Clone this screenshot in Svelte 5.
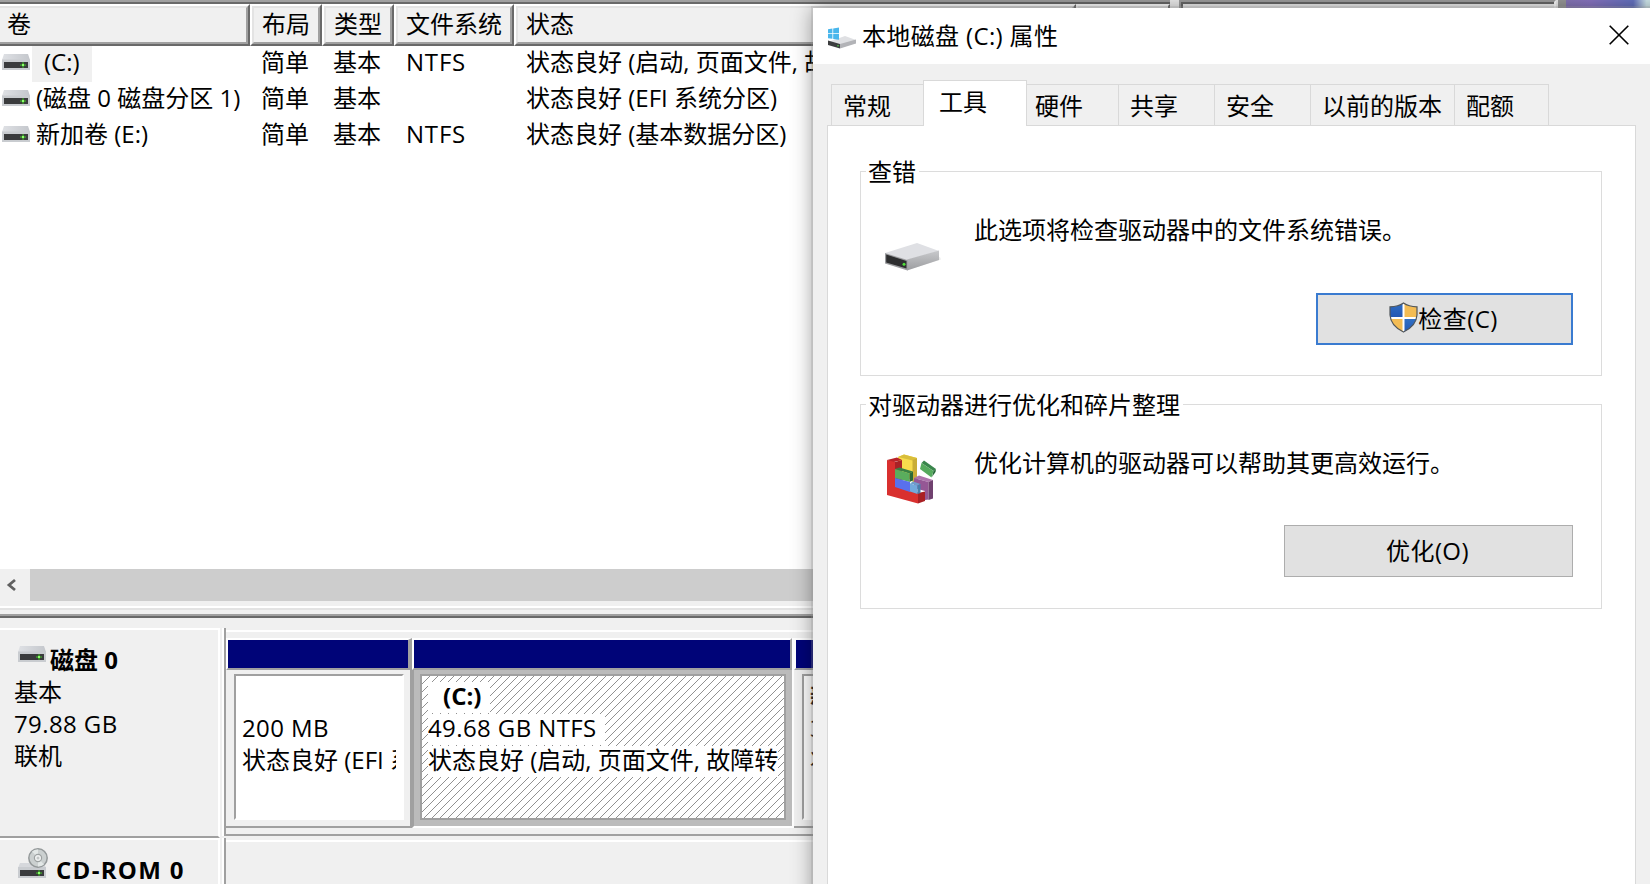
<script lang="ts">
	const volumes = [
		{ name: '(C:)', layout: '简单', type: '基本', fs: 'NTFS', status: '状态良好 (启动, 页面文件, 故障转储)', selected: true },
		{ name: '(磁盘 0 磁盘分区 1)', layout: '简单', type: '基本', fs: '', status: '状态良好 (EFI 系统分区)', selected: false },
		{ name: '新加卷 (E:)', layout: '简单', type: '基本', fs: 'NTFS', status: '状态良好 (基本数据分区)', selected: false }
	];

	const columns = [
		{ label: '卷', width: 250 },
		{ label: '布局', width: 72 },
		{ label: '类型', width: 72 },
		{ label: '文件系统', width: 120 },
		{ label: '状态', width: 562 }
	];

	const tabs = [
		{ label: '常规', width: 92 },
		{ label: '工具', width: 104 },
		{ label: '硬件', width: 91 },
		{ label: '共享', width: 96 },
		{ label: '安全', width: 96 },
		{ label: '以前的版本', width: 144 },
		{ label: '配额', width: 95 }
	];

	let active = $state('工具');
</script>

{#snippet driveIcon()}
	<svg class="drive" width="28" height="16" viewBox="0 0 28 16">
		<defs>
			<linearGradient id="lid" x1="0" x2="1">
				<stop offset="0" stop-color="#dfe1e5" />
				<stop offset="1" stop-color="#c4c7cc" />
			</linearGradient>
		</defs>
		<path d="M2 0H26L28 6H0Z" fill="url(#lid)" />
		<rect y="5.5" width="28" height="10.5" fill="#c9ccd0" />
		<rect x="2" y="8" width="24" height="6" fill="#3a3b3d" />
		<path d="M18 10.3h6v1.5h-6z" fill="#3f9a2c" />
		<path d="M20.2 8.2h1.7v5.6h-1.7z" fill="#3f9a2c" />
		<rect x="20" y="10" width="2" height="2" fill="#8dff6c" />
	</svg>
{/snippet}

<div class="desktop">
	<div class="manager">
		<div class="top">
			<div class="list-pane">
				<div class="header">
					{#each columns as col}
						<div class="col" style="width: {col.width}px"><span>{col.label}</span></div>
					{/each}
					<div class="col rest"></div>
				</div>
				<div class="rows">
					{#each volumes as v}
						<div class="row">
							<div class="cell volume">
								{@render driveIcon()}
								<span class="name" class:selected={v.selected}>{v.name}</span>
							</div>
							<div class="cell w72">{v.layout}</div>
							<div class="cell w72">{v.type}</div>
							<div class="cell fs">{v.fs}</div>
							<div class="cell">{v.status}</div>
						</div>
					{/each}
				</div>
				<div class="scrollbar">
					<svg width="30" height="32" viewBox="0 0 30 32">
						<path d="M15 11L9 16L15 21" fill="none" stroke="#606060" stroke-width="2.8" />
					</svg>
					<div class="thumb"></div>
				</div>
			</div>
			<div class="actions-pane"></div>
			<div class="wallpaper"></div>
		</div>
		<div class="splitter"></div>

		<div class="disk">
			<div class="disk-info">
				<div class="disk-title">{@render driveIcon()}<b>磁盘 0</b></div>
				<div>基本</div>
				<div class="size">79.88 GB</div>
				<div>联机</div>
			</div>
			<div class="parts">
				<div class="part efi">
					<div class="bar"></div>
					<div class="body">
						<div class="box">
							<div class="line">&nbsp;</div>
							<div class="line size">200 MB</div>
							<div class="line">状态良好 (EFI 系统分区)</div>
						</div>
					</div>
				</div>
				<div class="part sys">
					<div class="bar"></div>
					<div class="body">
						<div class="box">
							<svg class="hatch" width="362" height="142">
								<defs>
									<pattern id="hatch" width="8" height="8" patternUnits="userSpaceOnUse">
										<path d="M-1 1L1 -1M0 8L8 0M7 9L9 7" stroke="#858585" stroke-width="0.9" />
									</pattern>
								</defs>
								<rect width="362" height="142" fill="url(#hatch)" />
							</svg>
							<div class="line drive-name"><b>(C:)</b></div>
							<div class="line size">49.68 GB NTFS</div>
							<div class="line">状态良好 (启动, 页面文件, 故障转</div>
						</div>
					</div>
				</div>
				<div class="part data">
					<div class="bar"></div>
					<div class="body">
						<div class="box">
							<div class="line"><b>新加卷 (E:)</b></div>
							<div class="line size">30.00 GB NTFS</div>
							<div class="line">状态良好 (基本数据分区)</div>
						</div>
					</div>
				</div>
			</div>
		</div>

		<div class="disk cdrom">
			<div class="disk-info">
				<div class="disk-title">
					<svg width="30" height="32" viewBox="0 0 30 32">
						<path d="M2 15H26L28 20H0Z" fill="#d6d8dc" />
						<rect y="19" width="28" height="11" fill="#c9ccd0" />
						<rect x="2" y="22" width="24" height="6" fill="#3a3b3d" />
						<path d="M18 24.3h6v1.5h-6z" fill="#3f9a2c" />
						<path d="M20.2 22.2h1.7v5.6h-1.7z" fill="#3f9a2c" />
						<rect x="20" y="24" width="2" height="2" fill="#8dff6c" />
						<circle cx="20" cy="10" r="9.2" fill="#cbd0d0" stroke="#94999a" stroke-width="1.5" />
						<path d="M20 10L14 3.5A9 9 0 0 1 20 1.500ZM20 10L26 16.500A9 9 0 0 1 20 18.500Z" fill="#e3e8e7" />
						<circle cx="20" cy="10" r="3.600" fill="#f1f3f3" stroke="#9da2a2" stroke-width="1.2" />
						<circle cx="20" cy="10" r="1.500" fill="#c3c7c7" />
					</svg>
					<b>CD-ROM 0</b>
				</div>
			</div>
			<div class="parts"></div>
		</div>
	</div>

	<div class="dialog">
		<div class="titlebar">
			<svg width="30" height="24" viewBox="0 0 30 24">
				<path d="M1 15L18 9L29 13V16L13 21L1 17Z" fill="#dfe0e3" />
				<path d="M13 17L29 12.500V16.500L13 21.500Z" fill="#b2b3b7" />
				<path d="M1 13.500L13 17V21.500L1 18Z" fill="#3c3d3f" />
				<circle cx="11" cy="18.800" r=".8" fill="#53d548" />
				<path d="M1 2.300L5.400 1.600V6.300H1ZM6.200 1.500L12 .6V6.300H6.200ZM1 7.100H5.400V11.800L1 11.200ZM6.200 7.100H12V12.700L6.200 11.900Z" fill="#49b6ec" />
			</svg>
			<span class="title">本地磁盘 (C:) 属性</span>
			<svg class="close" width="20" height="20" viewBox="0 0 20 20">
				<path d="M.7 .7L19.300 19.300M19.300 .7L.7 19.300" stroke="#000" stroke-width="1.600" />
			</svg>
		</div>

		<div class="tabs">
			{#each tabs as tab}
				<button class="tab" class:active={active === tab.label} style="width: {tab.width}px" onclick={() => (active = tab.label)}>
					{tab.label}
				</button>
			{/each}
		</div>

		<div class="page">
			<section class="group">
				<div class="legend">查错</div>
				<div class="desc check">
					<svg width="60" height="60" viewBox="0 0 60 60">
						<defs>
							<linearGradient id="side" x1="0" x2="0" y1="0" y2="1">
								<stop offset="0" stop-color="#c8c9cc" />
								<stop offset="1" stop-color="#9c9da0" />
							</linearGradient>
						</defs>
						<path d="M24 54L57 43.500L56 41L24 51Z" fill="#ededed" />
						<path d="M1 37L33 27L55 35L23 44Z" fill="#dfe0e4" />
						<path d="M23 43.500L55 34.500V44L23 54.500Z" fill="url(#side)" />
						<path d="M1 37L23.500 44V54.500L1 47.500Z" fill="#9b9c9f" />
						<path d="M2.200 38.500L22.500 45V52.500L2.200 46.500Z" fill="#2d2e2f" />
						<circle cx="20" cy="48.300" r="1.500" fill="#4fdf38" />
					</svg>
					<span>此选项将检查驱动器中的文件系统错误。</span>
				</div>
				<button class="push default">
					<svg width="29" height="31" viewBox="0 0 29 31">
						<defs>
							<clipPath id="shield">
								<path d="M14.500 1C10.500 3.800 6 4.700 1 4.800V13C1.500 21 7 26.500 14.500 30C22 26.500 27.500 21 28 13V4.800C23 4.700 18.500 3.800 14.500 1Z" />
							</clipPath>
							<linearGradient id="blue" x1="0" x2="0" y1="0" y2="1">
								<stop offset="0" stop-color="#306fc4" />
								<stop offset="1" stop-color="#2458b4" />
							</linearGradient>
						</defs>
						<g clip-path="url(#shield)">
							<rect width="29" height="31" fill="#fff" />
							<rect width="13.500" height="15" fill="url(#blue)" />
							<rect x="15.500" width="14" height="15" fill="#f3bc54" />
							<rect y="17" width="13.500" height="14" fill="#f3bc54" />
							<rect x="15.500" y="17" width="14" height="14" fill="url(#blue)" />
						</g>
						<path d="M14.500 1C10.500 3.800 6 4.700 1 4.800V13C1.500 21 7 26.500 14.500 30C22 26.500 27.500 21 28 13V4.800C23 4.700 18.500 3.800 14.500 1Z" fill="none" stroke="#50565b" stroke-width="1.200" />
					</svg>
					<span>检查(C)</span>
				</button>
			</section>

			<section class="group">
				<div class="legend">对驱动器进行优化和碎片整理</div>
				<div class="desc">
					<svg width="60" height="60" viewBox="0 0 60 60">
						<path d="M14 8L20 5.500L33 9V32L14 27Z" fill="#f7dc4d" />
						<path d="M14 8L20 5.500L33 9L28.500 11.500Z" fill="#d9be3b" />
						<path d="M28.500 11L33 9V33L28.500 34Z" fill="#c9ad35" />
						<path d="M3 11L13 8.500L18 11L8 13.500Z" fill="#b92329" />
						<path d="M3 11L11 13V37L34 43.500V54.500L3 46Z" fill="#d9302f" />
						<path d="M11 13L18 11V36L11 38Z" fill="#a82226" />
						<path d="M34 44L41 42.500V52L34 54.500Z" fill="#a92025" />
						<path d="M30 29L35 26.500L49 31L44.500 33Z" fill="#ad74ac" />
						<path d="M30 29L44.500 33V50.500L41 51V42L30 39Z" fill="#955795" />
						<path d="M44.500 33L49 31V49.500L44.500 51Z" fill="#70416f" />
						<path d="M11 20L15.500 18.500L29 22.500L25.500 24.500Z" fill="#378044" />
						<path d="M11 20L25.500 24.500V33L11 29Z" fill="#5aad5d" />
						<path d="M25.500 24.500L29 22.500V31.500L25.500 33Z" fill="#2b6937" />
						<path d="M11 29L26 33V43L11 38Z" fill="#5970ed" />
						<path d="M26 34.500L29 32.500L36.500 35L33.500 36.500Z" fill="#6f9dcc" />
						<path d="M26 34.500L33.500 36.500V45L26 42.500Z" fill="#72a9dc" />
						<path d="M33.500 36.500L36.500 35V44L33.500 45Z" fill="#477fad" />
						<path d="M37.500 14L40 11.500L52 20L49.500 22Z" fill="#39854b" />
						<path d="M37.500 14L49.500 22L47.500 28.500L36 20Z" fill="#55aa5d" />
						<path d="M49.500 22L52 20L51.500 23L48 28Z" fill="#246837" />
					</svg>
					<span>优化计算机的驱动器可以帮助其更高效运行。</span>
				</div>
				<button class="push"><span>优化(O)</span></button>
			</section>
		</div>
	</div>
</div>

<style>
	:global(body) {
		margin: 0;
	}

	.desktop {
		position: relative;
		width: 1650px;
		height: 884px;
		overflow: hidden;
		background: #f0f0f0;
		color: #000;
		font: 24px/32px 'Open Sans', 'Noto Sans CJK SC', sans-serif;
		white-space: nowrap;
	}

	svg {
		display: block;
		flex: none;
	}

	.top {
		display: flex;
		height: 606px;
	}

	/* classic two-tone sunken edges */
	.list-pane {
		display: flex;
		flex-direction: column;
		width: 1170px;
		box-sizing: border-box;
		border-top: 2px solid #a0a0a0;
		background: #fff;
	}

	.header {
		display: flex;
		height: 44px;
		box-sizing: border-box;
		border-top: 2px solid #696969;
	}

	.col {
		display: flex;
		flex: none;
		box-sizing: border-box;
		border: 2px solid;
		border-color: #fff #696969 #696969 #fff;
		background: #f0f0f0;
	}

	.col span {
		flex: 1;
		padding-left: 8px;
		line-height: 32px;
		border: 2px solid;
		border-color: #e3e3e3 #a0a0a0 #a0a0a0 #e3e3e3;
	}

	.col:first-child {
		border-left: 0;
	}

	.col:first-child span {
		border-left: 0;
		padding-left: 7px;
	}

	.col.rest {
		flex: 1;
	}

	.rows {
		height: 523px;
	}

	.row {
		display: flex;
		height: 36px;
	}

	.cell {
		padding-left: 13px;
	}

	.volume {
		display: flex;
		box-sizing: border-box;
		width: 249px;
		padding-left: 2px;
	}

	.volume .drive {
		margin-top: 8px;
	}

	.name {
		margin-left: 2px;
		padding-left: 4px;
		height: 36px;
	}

	.name.selected {
		padding: 0 12px;
		background: #f0f0f0;
	}

	.w72 {
		width: 60px;
		padding-left: 12px;
	}

	.fs {
		width: 107px;
		letter-spacing: 0.8px;
	}

	.size {
		letter-spacing: 0.4px;
	}

	.scrollbar {
		display: flex;
		height: 32px;
		border-bottom: 5px solid #f0f0f0;
		background: #f0f0f0;
	}

	.thumb {
		flex: 1;
		background: #cdcdcd;
	}

	.actions-pane {
		width: 377px;
		margin-left: 9px;
		border: 2px solid #a0a0a0;
		border-right-color: #fff;
		box-shadow: inset 2px 2px #696969;
		box-sizing: border-box;
	}

	.wallpaper {
		flex: 1;
		margin-left: 2px;
		border-left: 8px solid #9a9a9a;
		background: linear-gradient(90deg, #8878b8, #8a76c4 30%, #6674c4 80%, #d4ecf0 96%);
	}

	.splitter {
		height: 10px;
		border-top: 2px solid #fff;
		box-shadow: inset 0 2px #e3e3e3, inset 0 -2px #696969, inset 0 -4px #a0a0a0;
		margin-bottom: 10px;
	}

	.disk {
		display: flex;
		height: 210px;
	}

	.disk-info {
		flex: none;
		width: 220px;
		box-sizing: border-box;
		padding: 13px 0 0 14px;
		border-top: 2px solid #fff;
		border-right: 2px solid #fff;
		border-bottom: 2px solid #a0a0a0;
	}

	.disk-title {
		display: flex;
		height: 33px;
		padding-left: 4px;
	}

	.disk-title b {
		margin: 3px 0 0 4px;
		line-height: 28px;
	}

	.disk-title .drive {
		margin-top: 3px;
	}

	.parts {
		display: flex;
		flex: none;
		box-sizing: border-box;
		width: 942px;
		height: 208px;
		margin-left: 4px;
		padding-top: 10px;
		border-left: 2px solid #a0a0a0;
		border-bottom: 2px solid #a0a0a0;
		box-shadow: -2px 0 #fff, inset 0 2px #f0f0f0, inset 0 4px #fff;
	}

	.part {
		display: flex;
		flex-direction: column;
		flex: none;
		box-sizing: border-box;
		height: 190px;
	}

	.bar {
		height: 28px;
		border: solid #a0a0a0;
		border-width: 2px 4px 2px 2px;
		border-top-color: #fff;
		border-left-color: #fff;
		background: #000478;
	}

	.body {
		display: flex;
		flex: 1;
		padding: 4px 6px 6px 8px;
		border-right: 2px solid #a0a0a0;
		border-bottom: 2px solid #a0a0a0;
	}

	.box {
		position: relative;
		flex: 1;
		width: 0;
		overflow: hidden;
		box-sizing: border-box;
		padding: 6px 6px 0;
		border: 2px solid #fff;
		border-top-color: #a0a0a0;
		border-left-color: #a0a0a0;
		background: #fff;
	}

	.line {
		position: relative;
		width: fit-content;
		max-width: 100%;
		height: 31px;
		line-height: 28px;
		margin-bottom: 1px;
		overflow: hidden;
		background: #fff;
	}

	.efi {
		width: 186px;
	}

	.sys {
		width: 382px;
		border-right: 2px solid #fff;
	}

	.sys .bar {
		border-right-width: 2px;
	}

	.sys .body {
		padding: 4px 6px 6px 6px;
		border-left: 2px solid #a0a0a0;
		border-right: 0;
		border-bottom-color: #fff;
		background: #bbb;
	}

	.sys .box {
		border-color: #a0a0a0;
	}

	.sys .size {
		padding-right: 8px;
	}

	.hatch {
		position: absolute;
		inset: 0;
	}

	.drive-name {
		padding: 0 9px 0 15px;
	}

	.data {
		width: 300px;
	}

	.cdrom .disk-info {
		padding-top: 8px;
	}

	.cdrom .disk-title b {
		margin: 8px 0 0 8px;
		letter-spacing: 1.3px;
	}

	.dialog {
		position: absolute;
		top: 8px;
		left: 813px;
		width: 900px;
		height: 960px;
		background: #f0f0f0;
		box-shadow: 0 0 0 2px rgba(150, 150, 150, 0.25), 0 0 20px rgba(0, 0, 0, 0.4);
	}

	.titlebar {
		display: flex;
		align-items: center;
		height: 56px;
		padding-left: 14px;
		background: #fff;
	}

	.title {
		margin: -1px 0 0 5px;
		letter-spacing: 0.35px;
	}

	.titlebar > svg:first-child {
		margin-top: 6px;
	}

	.close {
		margin: -2px 84px 0 auto;
	}

	.tabs {
		display: flex;
		align-items: flex-end;
		height: 45px;
		padding: 16px 0 0 18px;
	}

	.tab {
		height: 41px;
		padding: 2px 0 0 11px;
		box-sizing: border-box;
		border: 1px solid #d9d9d9;
		border-width: 1px 0 0 1px;
		background: #f0f0f0;
		color: inherit;
		font: inherit;
		text-align: left;
	}

	.tab:last-child {
		border-right-width: 1px;
	}

	.tab.active {
		position: relative;
		height: 46px;
		margin-bottom: -1px;
		padding: 0 0 4px 15px;
		border-right-width: 1px;
		background: #fff;
	}

	.tab.active + .tab {
		border-left-width: 0;
		padding-left: 8px;
	}

	.page {
		display: flex;
		flex-direction: column;
		gap: 28px;
		box-sizing: border-box;
		width: 809px;
		height: 800px;
		margin-left: 14px;
		padding: 45px 33px 0 32px;
		border: 1px solid #d9d9d9;
		background: #fff;
	}

	.group {
		display: flex;
		flex-direction: column;
		height: 205px;
		box-sizing: border-box;
		border: 1px solid #dcdcdc;
	}

	.legend {
		align-self: flex-start;
		height: 32px;
		margin: -16px 0 0 5px;
		padding: 0 3px 0 2px;
		background: #fff;
	}

	.desc {
		display: flex;
		padding: 26px 0 0 23px;
	}

	.desc svg {
		margin-top: 2px;
	}

	.desc span {
		margin-left: 30px;
	}

	.push {
		display: flex;
		align-items: center;
		justify-content: center;
		align-self: flex-end;
		width: 289px;
		height: 52px;
		margin: 16px 28px 0 0;
		padding: 0 2px 3px 0;
		box-sizing: border-box;
		border: 1px solid #adadad;
		background: #e1e1e1;
		color: inherit;
		font: inherit;
		letter-spacing: 0.4px;
	}

	.push.default {
		width: 257px;
		margin-top: 17px;
		border: 2px solid #3a7bd0;
	}

	.push span {
		margin-top: 2px;
	}
</style>
